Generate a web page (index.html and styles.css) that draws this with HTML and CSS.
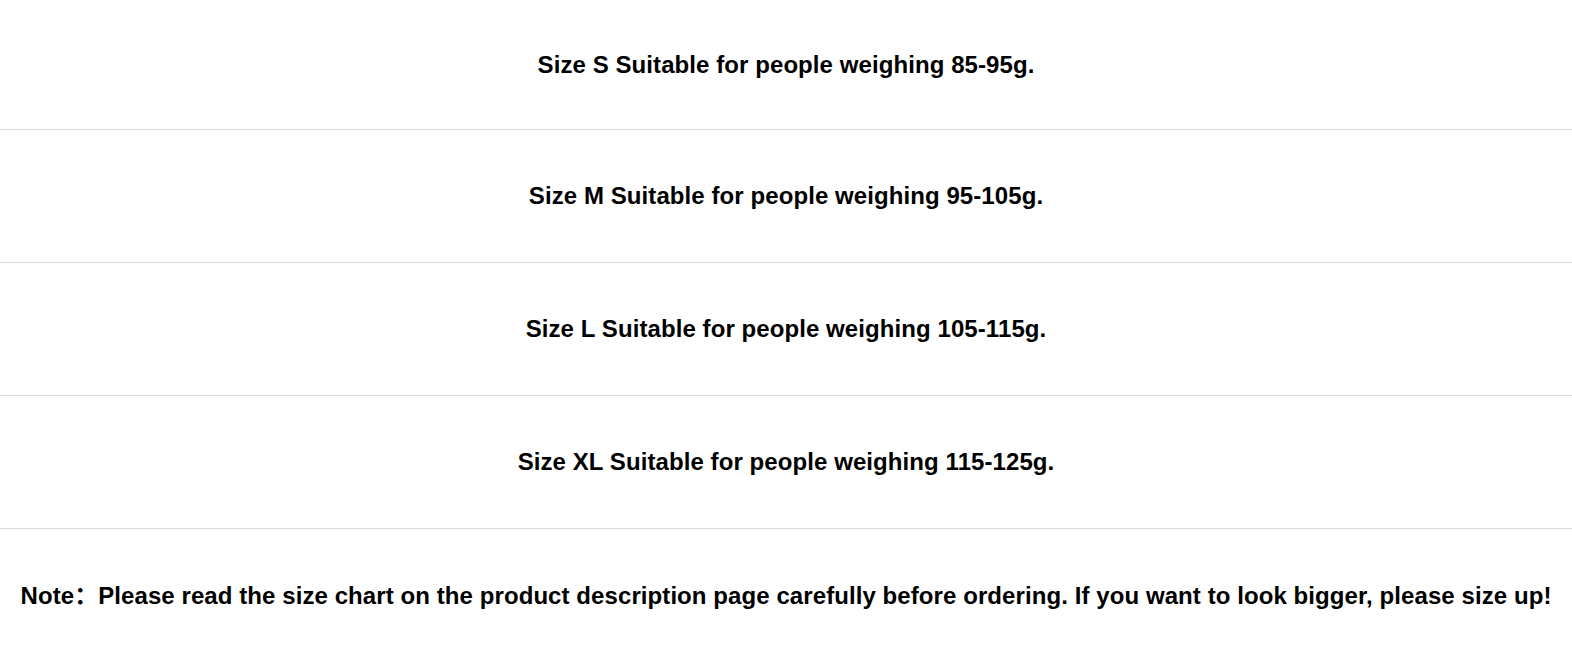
FILE: index.html
```html
<!DOCTYPE html>
<html>
<head>
<meta charset="utf-8">
<link rel="stylesheet" href="styles.css">
</head>
<body>
<div class="table">
  <div class="row first">Size S Suitable for people weighing 85-95g.</div>
  <div class="row">Size M Suitable for people weighing 95-105g.</div>
  <div class="row">Size L Suitable for people weighing 105-115g.</div>
  <div class="row">Size XL Suitable for people weighing 115-125g.</div>
  <div class="row last">Note：Please read the size chart on the product description page carefully before ordering. If you want to look bigger, please size up!</div>
</div>
</body>
</html>
```
FILE: styles.css
```css
html, body {
  margin: 0;
  padding: 0;
  background: #ffffff;
}
.table {
  display: flex;
  flex-direction: column;
  width: 1572px;
}
.row {
  height: 132px;
  display: flex;
  align-items: center;
  justify-content: center;
  font-family: "Liberation Sans", "Noto Sans CJK SC", Arial, sans-serif;
  font-weight: bold;
  font-size: 24px;
  letter-spacing: 0.08px;
  color: #000000;
  border-bottom: 1px solid #d9d9d9;
  white-space: nowrap;
}
.row.first {
  height: 129px;
}
.row.last {
  border-bottom: none;
  padding-bottom: 3px;
  height: 129px;
}
```
